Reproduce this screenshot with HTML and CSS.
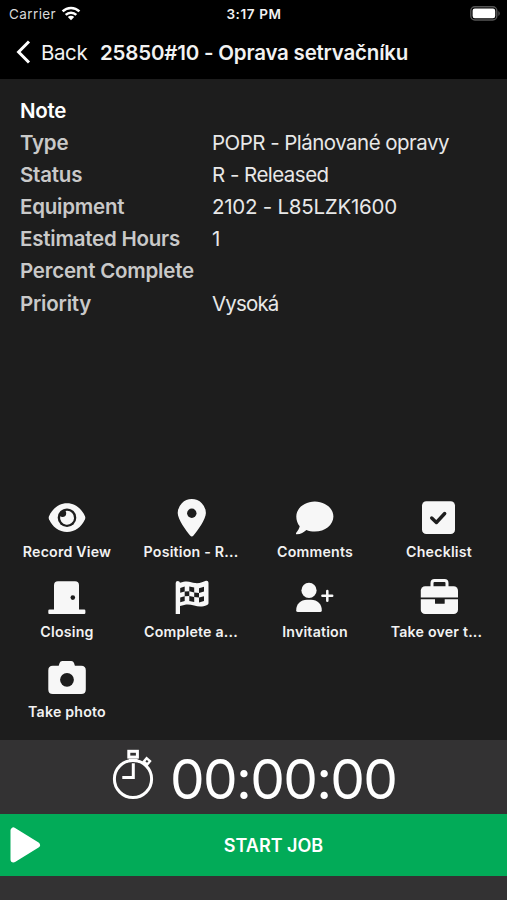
FILE: index.html
```
<!DOCTYPE html>
<html lang="en">
<head>
    <meta charset="UTF-8">
    <meta name="viewport" content="width=device-width, initial-scale=1.0">
    <title>Job detail</title>
    <link rel="stylesheet" href="styles.css">
</head>
<body>
    <div class="screen">
        <header class="header">
            <div class="status-bar">
                <div class="carrier">
                    <span class="carrier-name">Carrier</span>
                    <svg class="wifi" width="20" height="15" viewBox="0 0 20 15" fill="none" stroke="#fff" stroke-width="2.5">
                        <path d="M1.6 5.4a12 12 0 0 1 16.8 0"/>
                        <path d="M4.7 8.9a7.5 7.5 0 0 1 10.6 0"/>
                        <path d="M10 14.2L6.8 11a4.6 4.6 0 0 1 6.4 0z" fill="#fff" stroke="none"/>
                    </svg>
                </div>
                <span class="clock">3:17 PM</span>
                <svg class="battery" width="31" height="15" viewBox="0 0 31 15">
                    <rect x="0.8" y="0.8" width="26" height="13.2" rx="4" fill="none" stroke="#555" stroke-width="1.4"/>
                    <rect x="2.6" y="2.6" width="22.6" height="9.6" rx="2.2" fill="#fff"/>
                    <path d="M28.4 5v5a3 3 0 0 0 0-5z" fill="#555"/>
                </svg>
            </div>
            <nav class="nav">
                <a class="back" href="#">
                    <svg width="15" height="24" viewBox="0 0 15 24" fill="none" stroke="#fff" stroke-width="3">
                        <path d="M13 1.5L2.6 12 13 22.5"/>
                    </svg>
                    <span>Back</span>
                </a>
                <h1 class="title">25850#10 - Oprava setrvačníku</h1>
            </nav>
        </header>

        <main class="content">
            <dl class="details">
                <dt class="note">Note</dt><dd></dd>
                <dt>Type</dt><dd>POPR - Plánované opravy</dd>
                <dt>Status</dt><dd>R - Released</dd>
                <dt>Equipment</dt><dd class="code">2102 - L85LZK1600</dd>
                <dt>Estimated Hours</dt><dd>1</dd>
                <dt>Percent Complete</dt><dd></dd>
                <dt>Priority</dt><dd class="priority">Vysoká</dd>
            </dl>

            <div class="actions">
                <a class="action" href="#">
                    <svg viewBox="0 0 38 38">
                        <path d="M1 17.2C4.5 9.500 11 4.300 19 4.300s14.500 5.200 18 12.900q.6 1.500 0 3C33.500 27.800 27 33 19 33S4.500 27.800 1 20.200q-.6-1.500 0-3z"/>
                        <circle class="hole" cx="19" cy="18.700" r="9.300"/>
                        <path d="M19 11.700a7 7 0 1 1-6.800 5.600q.9.700 2.200.7a3.800 3.800 0 0 0 3.800-3.800q0-1.400-.7-2.300z"/>
                    </svg>
                    <span>Record View</span>
                </a>
                <a class="action" href="#">
                    <svg viewBox="0 0 38 38">
                        <path d="M19.800 0a14.100 14.100 0 0 1 14.100 14.100c0 6.400-8.600 17.900-12.400 22.400a2.200 2.200 0 0 1-3.400 0C14.300 32 5.700 20.500 5.700 14.100A14.100 14.100 0 0 1 19.800 0z"/>
                        <circle class="hole" cx="19.800" cy="14.200" r="4.700"/>
                    </svg>
                    <span>Position - R...</span>
                </a>
                <a class="action" href="#">
                    <svg viewBox="0 0 38 38">
                        <path d="M18.800 2.400c10.300 0 18.600 6.800 18.600 15.100s-8.300 15.100-18.600 15.100c-3 0-5.900-.6-8.400-1.600C8 33 4.700 35.300.8 35.300c-.8 0-1.100-.9-.6-1.500 1.500-1.700 3-4 3.500-6.500C1.500 24.700.3 21.300.3 17.500.3 9.200 8.500 2.400 18.800 2.400z"/>
                    </svg>
                    <span>Comments</span>
                </a>
                <a class="action" href="#">
                    <svg viewBox="0 0 38 38">
                        <rect x="2" y="2.200" width="33" height="32.800" rx="4.300"/>
                        <path class="cut" d="M11.700 19l4.700 4.500 8.300-9" stroke-width="3.400" stroke-linecap="round" stroke-linejoin="round"/>
                    </svg>
                    <span>Checklist</span>
                </a>
                <a class="action" href="#">
                    <svg viewBox="0 0 38 38">
                        <path d="M6 30.500V6.200q0-4 4-4h17q4 0 4 4v24.300h5.200q1.200 0 1.200 1.200v2q0 1.200-1.200 1.200h-35Q.3 34.900.3 33.700v-2q0-1.200 1.200-1.200z"/>
                        <circle class="hole" cx="24.800" cy="18.600" r="2.300"/>
                    </svg>
                    <span>Closing</span>
                </a>
                <a class="action" href="#">
                    <svg viewBox="0 0 38 38">
                        <path d="M3.700 4q0-2 2-2T8 3.800c8-3 11-.2 15 .3 5 .6 8-1.500 11-2.300q2.500-.3 2.500 2v20.500q0 1-1.400 1.600c-5 2.200-9 1.600-13 .5-5-1.400-8.500-1.500-14.100.7V35H3.700z"/>
                        <path class="hole" d="M8.200 9l4.500-1.400v4.800l-4.500 1.400zM17.300 7.500l4.900 1.100v4.900l-4.900-1.200zM27 9.300l5-1.500v4.700l-5 1.400zM12.700 12.400l4.600-.1v4.800l-4.600.1zM22.200 13.500l4.800.4v4.700l-4.800-.5zM8.200 18.500l4.500-1.300V22l-4.500 1.200zM17.300 17.100l4.900 1v5l-4.900-1.200zM27 18.600l5-1.400V22l-5 1.500z"/>
                    </svg>
                    <span>Complete a...</span>
                </a>
                <a class="action" href="#">
                    <svg viewBox="0 0 38 38">
                        <circle cx="13" cy="11.400" r="7.600"/>
                        <path d="M.2 31.400C.2 25 4.500 20.800 11 20.800h4c6.500 0 10.800 4.200 10.800 10.600q0 1.600-1.800 1.600H2Q.2 33 .2 31.400z"/>
                        <path d="M31.300 11.900v9.800M26.400 16.800h9.800" fill="none" stroke="#f7f7f7" stroke-width="2.500" stroke-linecap="round"/>
                    </svg>
                    <span>Invitation</span>
                </a>
                <a class="action take-over" href="#">
                    <svg viewBox="0 0 38 38">
                        <path d="M12 8.500V4q0-2.500 2.500-2.500h10Q27 1.500 27 4v4.500" fill="none" stroke="#f7f7f7" stroke-width="3"/>
                        <rect x=".8" y="7.200" width="37.200" height="27.800" rx="4.300"/>
                        <path class="hole" d="M0 18.500h38v1.700H24.700v4q0 .6-.6.600h-8.500q-.6 0-.6-.6v-4H0z"/>
                    </svg>
                    <span>Take over t...</span>
                </a>
                <a class="action" href="#">
                    <svg viewBox="0 0 38 38">
                        <path d="M10.700 6.800l.9-2.800q.7-1.900 2.700-1.900h9q2 0 2.700 1.900l.9 2.800h6.300q4.600 0 4.600 4.500v19.200q0 4.500-4.600 4.500H4.800Q.3 35 .3 30.500V11.300q0-4.500 4.500-4.500z"/>
                        <circle class="hole" cx="19" cy="20.800" r="6.900"/>
                    </svg>
                    <span>Take photo</span>
                </a>
            </div>
        </main>

        <footer class="footer">
            <div class="timer">
                <svg width="46" height="60" viewBox="0 0 46 60" fill="none" stroke="#fff" stroke-width="3">
                    <circle cx="23" cy="32" r="18.600"/>
                    <rect x="18.800" y="4.300" width="8.600" height="5.800"/>
                    <path d="M19 13.200h8.500M23.300 16.300v14.200h-11"/>
                    <path d="M33.800 14.600l2.800-3.400 3.400 3-2.800 3.300z" stroke-width="2.400"/>
                </svg>
                <span class="time">00:00:00</span>
            </div>
            <button class="start" type="button">
                <svg width="31" height="36" viewBox="0 0 31 36">
                    <path d="M3.500 3.500v29L27 18z" fill="#fff" stroke="#fff" stroke-width="6" stroke-linejoin="round"/>
                </svg>
                <span>START JOB</span>
            </button>
        </footer>
    </div>
</body>
</html>
```
FILE: styles.css
```
body {
    margin: 0;
    background-color: #1d1d1d;
    color: #f2f2f2;
    font-family: Inter, "Liberation Sans", sans-serif;
}

a {
    color: inherit;
    text-decoration: none;
}

.screen {
    display: flex;
    flex-direction: column;
    height: 900px;
    overflow: hidden;
}

.header {
    height: 79px;
    background-color: #000;
}

.status-bar {
    display: grid;
    grid-template-columns: 1fr auto 1fr;
    align-items: center;
    height: 27px;
    padding: 0 6px 0 9px;
    font-size: 13.5px;
}

.carrier {
    display: flex;
    align-items: center;
    gap: 5px;
    color: #d8d8d8;
}

.carrier-name {
    letter-spacing: 0.4px;
}

.clock {
    padding-right: 2px;
    font-weight: 600;
    letter-spacing: 0.6px;
}

.battery {
    justify-self: end;
}

.nav {
    display: flex;
    align-items: center;
    height: 50px;
    padding-left: 16px;
}

.back {
    display: flex;
    align-items: center;
    gap: 10px;
    width: 84px;
    font-size: 20.5px;
    letter-spacing: -0.4px;
}

.title {
    margin: 0;
    font-size: 20.5px;
    font-weight: 600;
    letter-spacing: -0.2px;
    white-space: nowrap;
}

.content {
    display: flex;
    flex: 1;
    flex-direction: column;
    justify-content: space-between;
}

.details {
    display: grid;
    grid-template-columns: 192px 1fr;
    grid-auto-rows: 32.1px;
    margin: 0;
    padding: 16px 20px 0;
    font-size: 20.5px;
    line-height: 32px;
    white-space: nowrap;
}

.details dt {
    color: #c9c9c9;
    font-weight: 600;
    letter-spacing: -0.22px;
}

.details .note {
    color: #fff;
    letter-spacing: -0.3px;
}

.details dd {
    margin: 0;
    color: #e8e8e8;
    letter-spacing: -0.53px;
}

.details .code {
    letter-spacing: -0.25px;
}

.details .priority {
    letter-spacing: -0.85px;
}

.actions {
    display: grid;
    grid-template-columns: repeat(4, 124px);
    grid-auto-rows: 80px;
    padding: 0 5px 1px;
}

.action {
    display: flex;
    flex-direction: column;
    align-items: center;
    gap: 6px;
    font-size: 14.2px;
    font-weight: 600;
    letter-spacing: 0.2px;
    line-height: 18px;
}

.action svg {
    width: 38px;
    height: 38px;
    fill: #f7f7f7;
}

.action .hole {
    fill: #1d1d1d;
}

.action .cut {
    fill: none;
    stroke: #1d1d1d;
}

.take-over span {
    padding-right: 5px;
}

.footer {
    height: 160px;
    background-color: #333233;
}

.timer {
    display: flex;
    align-items: center;
    height: 74px;
    padding-left: 110px;
    color: #fff;
}

.time {
    margin-left: 14px;
    padding-top: 4px;
    font-size: 55px;
    font-weight: 400;
    letter-spacing: -1.7px;
    line-height: 70px;
}

.start {
    display: flex;
    align-items: center;
    width: 100%;
    height: 62px;
    padding: 0 0 0 10px;
    border: none;
    background-color: #02ab58;
    color: #fff;
    font-family: inherit;
    font-size: 18px;
    font-weight: 600;
}

.start span {
    flex: 1;
    padding-right: 1px;
    text-align: center;
}
```
